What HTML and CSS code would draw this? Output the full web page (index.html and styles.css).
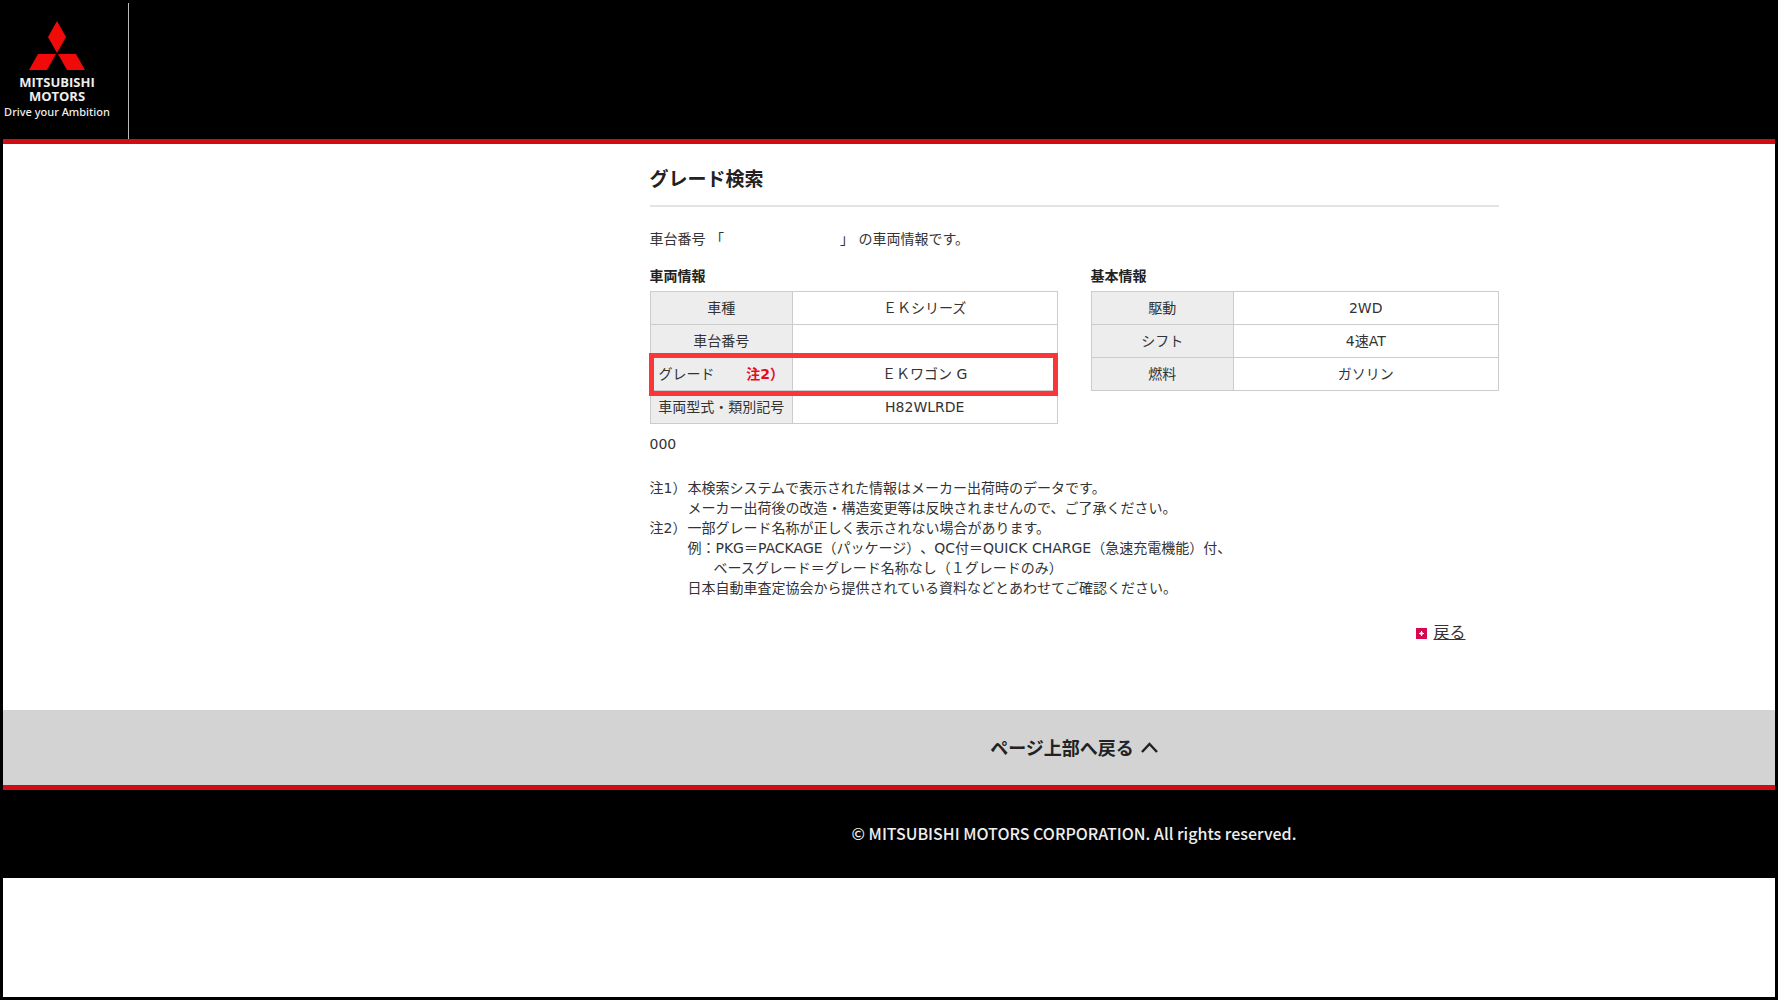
FILE: index.html
```html
<!DOCTYPE html>
<html lang="ja">
<head>
<meta charset="utf-8">
<meta name="viewport" content="width=device-width, initial-scale=1">
<title>グレード検索 | MITSUBISHI MOTORS</title>
<link rel="stylesheet" href="styles.css">
</head>
<body>
<header class="site-header">
  <a class="brand" href="#">
    <svg class="brand-mark" viewBox="0 0 56 49" aria-hidden="true">
      <path fill="#f00a0a" d="M28 0 37 16 28 32 19 16ZM9 33H27L18 49H0ZM29 33H47L56 49H38Z"/>
    </svg>
    <span class="brand-name">MITSUBISHI<br>MOTORS</span>
    <span class="brand-tag">Drive your Ambition</span>
  </a>
</header>

<main class="offset">
  <div class="content">
    <h1 class="title">グレード検索</h1>
    <p class="lead"><span>車台番号 「</span><span class="lead-number"></span><span>」 の車両情報です。</span></p>

    <div class="tables">
      <section>
        <h2 class="subtitle">車両情報</h2>
        <table class="spec">
          <tr><th scope="row">車種</th><td>ＥＫシリーズ</td></tr>
          <tr><th scope="row">車台番号</th><td></td></tr>
          <tr class="marked"><th scope="row"><span class="grade">グレード<strong class="ref">注2）</strong></span></th><td>ＥＫワゴン G</td></tr>
          <tr><th scope="row">車両型式・類別記号</th><td>H82WLRDE</td></tr>
        </table>
      </section>
      <section>
        <h2 class="subtitle">基本情報</h2>
        <table class="spec">
          <tr><th scope="row">駆動</th><td>2WD</td></tr>
          <tr><th scope="row">シフト</th><td>4速AT</td></tr>
          <tr><th scope="row">燃料</th><td>ガソリン</td></tr>
        </table>
      </section>
    </div>

    <p class="code">000</p>

    <dl class="notes">
      <dt>注1）</dt>
      <dd>本検索システムで表示された情報はメーカー出荷時のデータです。<br>メーカー出荷後の改造・構造変更等は反映されませんので、ご了承ください。</dd>
      <dt>注2）</dt>
      <dd>一部グレード名称が正しく表示されない場合があります。<br>例：PKG＝PACKAGE（パッケージ）、QC付＝QUICK CHARGE（急速充電機能）付、<br><span class="indent">ベースグレード＝グレード名称なし（１グレードのみ）</span><br>日本自動車査定協会から提供されている資料などとあわせてご確認ください。</dd>
    </dl>

    <p class="back">
      <svg class="back-icon" viewBox="0 0 11 11" aria-hidden="true"><path fill="#d9074f" d="M0 0h11v11H0z"/><path fill="#fff" d="M5 3h1v2h2v1H6v2H5V6H3V5h2z"/><path fill="#fff" fill-opacity=".6" d="M4 4h3v3H4z"/></svg>
      <a class="back-link" href="#">戻る</a>
    </p>
  </div>
</main>

<nav class="to-top offset">
  <a class="to-top-link" href="#">ページ上部へ戻る
    <svg class="chevron" viewBox="0 0 17 11" aria-hidden="true"><path fill="none" stroke="#222" stroke-width="2.500" d="M1 10 8.500 2 16 10"/></svg>
  </a>
</nav>

<footer class="site-footer offset">
  <small class="copyright">© MITSUBISHI MOTORS CORPORATION. All rights reserved.</small>
</footer>
</body>
</html>
```

FILE: styles.css
```css
* {
  box-sizing: border-box;
  margin: 0;
  padding: 0;
}

body {
  min-height: 100vh;
  border: 3px solid #000;
  background: #fff;
  color: #333;
  font: 14px/20px "DejaVu Sans", "Noto Sans CJK JP", sans-serif;
  text-spacing-trim: space-all;
}

a {
  color: inherit;
  text-decoration: none;
}

.site-header {
  display: flex;
  background: #000;
  border-bottom: 5px solid #d00d12;
}

.brand {
  display: flex;
  flex-direction: column;
  align-items: center;
  width: 126px;
  padding: 18px 17px 18px 0;
  border-right: 1px solid #bbb;
  color: #eee;
  text-align: center;
  white-space: nowrap;
}

.brand-mark {
  width: 56px;
  height: 49px;
}

.brand-name {
  margin-top: 5px;
  font: 700 13px/14px "Open Sans", sans-serif;
}

.brand-tag {
  margin-top: 1px;
  margin-bottom: 1px;
  font: 500 11px/16px "Noto Sans", sans-serif;
}

.offset {
  padding-left: 370px;
}

.content {
  max-width: 849px;
  margin: 0 auto;
  padding: 20px 0 67px;
}

.title {
  padding-bottom: 11px;
  border-bottom: 2px solid #e4e4e4;
  color: #222;
  font-size: 19px;
  line-height: 30px;
}

.lead {
  display: flex;
  margin-top: 22px;
  white-space: pre;
}

.lead-number {
  width: 116px;
}

.tables {
  display: grid;
  grid-template-columns: 1fr 1fr;
  gap: 33px;
  margin-top: 17px;
}

.subtitle {
  margin-bottom: 5px;
  color: #222;
  font-size: 14px;
  line-height: 20px;
}

.spec {
  width: 100%;
  border-collapse: collapse;
  table-layout: fixed;
}

.spec th,
.spec td {
  height: 33px;
  border: 1px solid #ccc;
  font-weight: 400;
  text-align: center;
  white-space: nowrap;
}

.spec th {
  width: 35%;
  background: #ededed;
}

.marked {
  position: relative;
}

.marked td::after {
  content: "";
  position: absolute;
  inset: -5px -1px;
  border: 5px solid #fa3638;
}

.grade {
  display: flex;
  justify-content: space-between;
  padding: 0 8px;
}

.ref {
  color: #e8091c;
}

.code {
  margin-top: 10px;
}

.notes {
  display: grid;
  grid-template-columns: 38px 1fr;
  margin-top: 24px;
}

.indent {
  padding-left: 26px;
}

.back {
  display: flex;
  justify-content: flex-end;
  align-items: center;
  gap: 6px;
  margin-top: 25px;
  padding-right: 33px;
}

.back-icon {
  width: 11px;
  height: 11px;
}

.back-link {
  font-size: 16px;
  text-decoration: underline;
}

.to-top {
  display: flex;
  justify-content: center;
  background: #d3d3d3;
  border-bottom: 5px solid #d00d12;
}

.to-top-link {
  display: flex;
  align-items: center;
  gap: 7px;
  padding: 23px 0 24px;
  color: #222;
  font: 700 18px/28px "Noto Sans CJK JP", sans-serif;
}

.chevron {
  width: 17px;
  height: 11px;
}

.site-footer {
  display: flex;
  justify-content: center;
  padding-top: 31px;
  padding-bottom: 33px;
  background: #000;
}

.copyright {
  color: #eee;
  font: 500 16px/24px "Noto Sans CJK JP", sans-serif;
}
```
